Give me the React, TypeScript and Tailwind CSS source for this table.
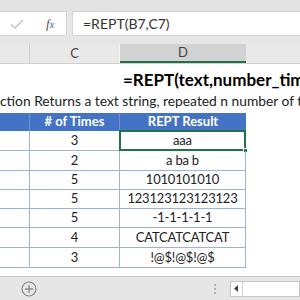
import React from "react";

const rows = [
  { n: "3", result: "aaa", h: "h-[20px]" },
  { n: "2", result: "a ba b", h: "h-[20px]" },
  { n: "5", result: "1010101010", h: "h-[19px]" },
  { n: "5", result: "123123123123123", h: "h-[19px]" },
  { n: "5", result: "-1-1-1-1-1", h: "h-[19px]" },
  { n: "4", result: "CATCATCATCAT", h: "h-[20px]" },
  { n: "3", result: "!@$!@$!@$", h: "h-[20px]" },
];

const font = { fontFamily: "Lato, 'Liberation Sans', sans-serif" };

export default function App() {
  return (
    <div className="w-[300px] h-[300px] overflow-hidden bg-white flex flex-col text-[#222]" style={font}>
      {/* ribbon edge */}
      <div className="h-[11px] bg-[#e3e3e3] shrink-0" />

      {/* formula bar */}
      <div className="h-[25px] shrink-0 flex bg-[#e6e6e6]">
        <div className="w-[67px] bg-white border-y border-r border-[#d4d4d4] flex items-center">
          <svg width="16" height="12" viewBox="0 0 16 12" className="ml-[9px]">
            <path d="M2 6.5 L6 10 L14 2" fill="none" stroke="#c4c4c4" strokeWidth="1.6" />
          </svg>
          <span className="ml-[21px] italic text-[13px] text-[#555]" style={{ fontFamily: "'Liberation Serif', serif" }}>
            f<span className="text-[10px]">x</span>
          </span>
        </div>
        <div className="ml-[5px] flex-1 bg-white border-y border-l border-[#d4d4d4] flex items-center pl-[10px] text-[14px] text-[#333]">
          =REPT(B7,C7)
        </div>
      </div>

      <div className="h-[8px] bg-[#e6e6e6] shrink-0" />

      {/* column headers */}
      <div className="h-[20px] shrink-0 flex bg-[#e9e9e9] border-b border-[#d0d0d0] text-[13px] text-[#444]">
        <div className="w-[30px] border-r border-[#cfcfcf]" />
        <div className="w-[90px] border-r border-[#f4f4f4] flex items-center justify-center">C</div>
        <div className="w-[126px] bg-[#d2d2d2] border-b-2 border-[#217346] flex items-center justify-center">D</div>
        <div className="flex-1" />
      </div>

      {/* sheet */}
      <div className="flex-1 relative">
        <div className="h-[26px] flex items-end pl-[123px] whitespace-nowrap text-[17px] font-bold text-black leading-none pb-[2px]">
          =REPT(text,number_tim
        </div>
        <div className="h-[23px] flex items-center whitespace-nowrap text-[13.8px] text-[#222]">
          ction Returns a text string, repeated n number of t
        </div>

        <div className="w-[246px]">
          <div className="h-[18px] flex bg-[#4472c4] text-white font-bold text-[13px]">
            <div className="w-[30px] border-r border-[#6f8fd0]" />
            <div className="w-[90px] border-r border-[#6f8fd0] flex items-center justify-center">
              # of Times
            </div>
            <div className="flex-1 flex items-center justify-center">REPT Result</div>
          </div>
          {rows.map((r, i) => (
            <div key={i} className={`${r.h} flex border-b border-[#9bb3df] text-[13px]`}>
              <div className="w-[30px] border-r border-[#9bb3df]" />
              <div className="w-[90px] border-r border-[#9bb3df] flex items-center justify-center">{r.n}</div>
              <div className="flex-1 border-r border-[#9bb3df] flex items-center justify-center relative tracking-[-0.2px]">
                {r.result}
                {i === 0 && (
                  <>
                    <div className="absolute inset-[-1px] border-2 border-[#217346]" />
                    <div className="absolute right-[-3px] bottom-[-3px] w-[5px] h-[5px] bg-[#217346] border border-white" />
                  </>
                )}
              </div>
            </div>
          ))}
        </div>
      </div>

      {/* sheet tabs bar */}
      <div className="h-[24px] shrink-0 bg-[#e6e6e6] border-t border-[#c6c6c6] flex items-center">
        <svg width="16" height="16" viewBox="0 0 16 16" className="ml-[21px]">
          <circle cx="8" cy="8" r="7" fill="none" stroke="#8a8a8a" strokeWidth="1.2" />
          <path d="M8 4 V12 M4 8 H12" stroke="#8a8a8a" strokeWidth="1.4" />
        </svg>
        <div className="ml-[177px] flex flex-col gap-[2px]">
          <div className="w-[2px] h-[2px] bg-[#b0b0b0]" />
          <div className="w-[2px] h-[2px] bg-[#b0b0b0]" />
          <div className="w-[2px] h-[2px] bg-[#b0b0b0]" />
        </div>
        <div className="ml-[14px] h-[16px] flex-1 bg-white border border-[#c6c6c6] flex items-center">
          <div className="w-[12px] flex items-center justify-center border-r border-[#d0d0d0] h-full">
            <svg width="5" height="7" viewBox="0 0 5 7">
              <path d="M4 0 L0 3.5 L4 7 Z" fill="#444" />
            </svg>
          </div>
        </div>
      </div>
    </div>
  );
}
